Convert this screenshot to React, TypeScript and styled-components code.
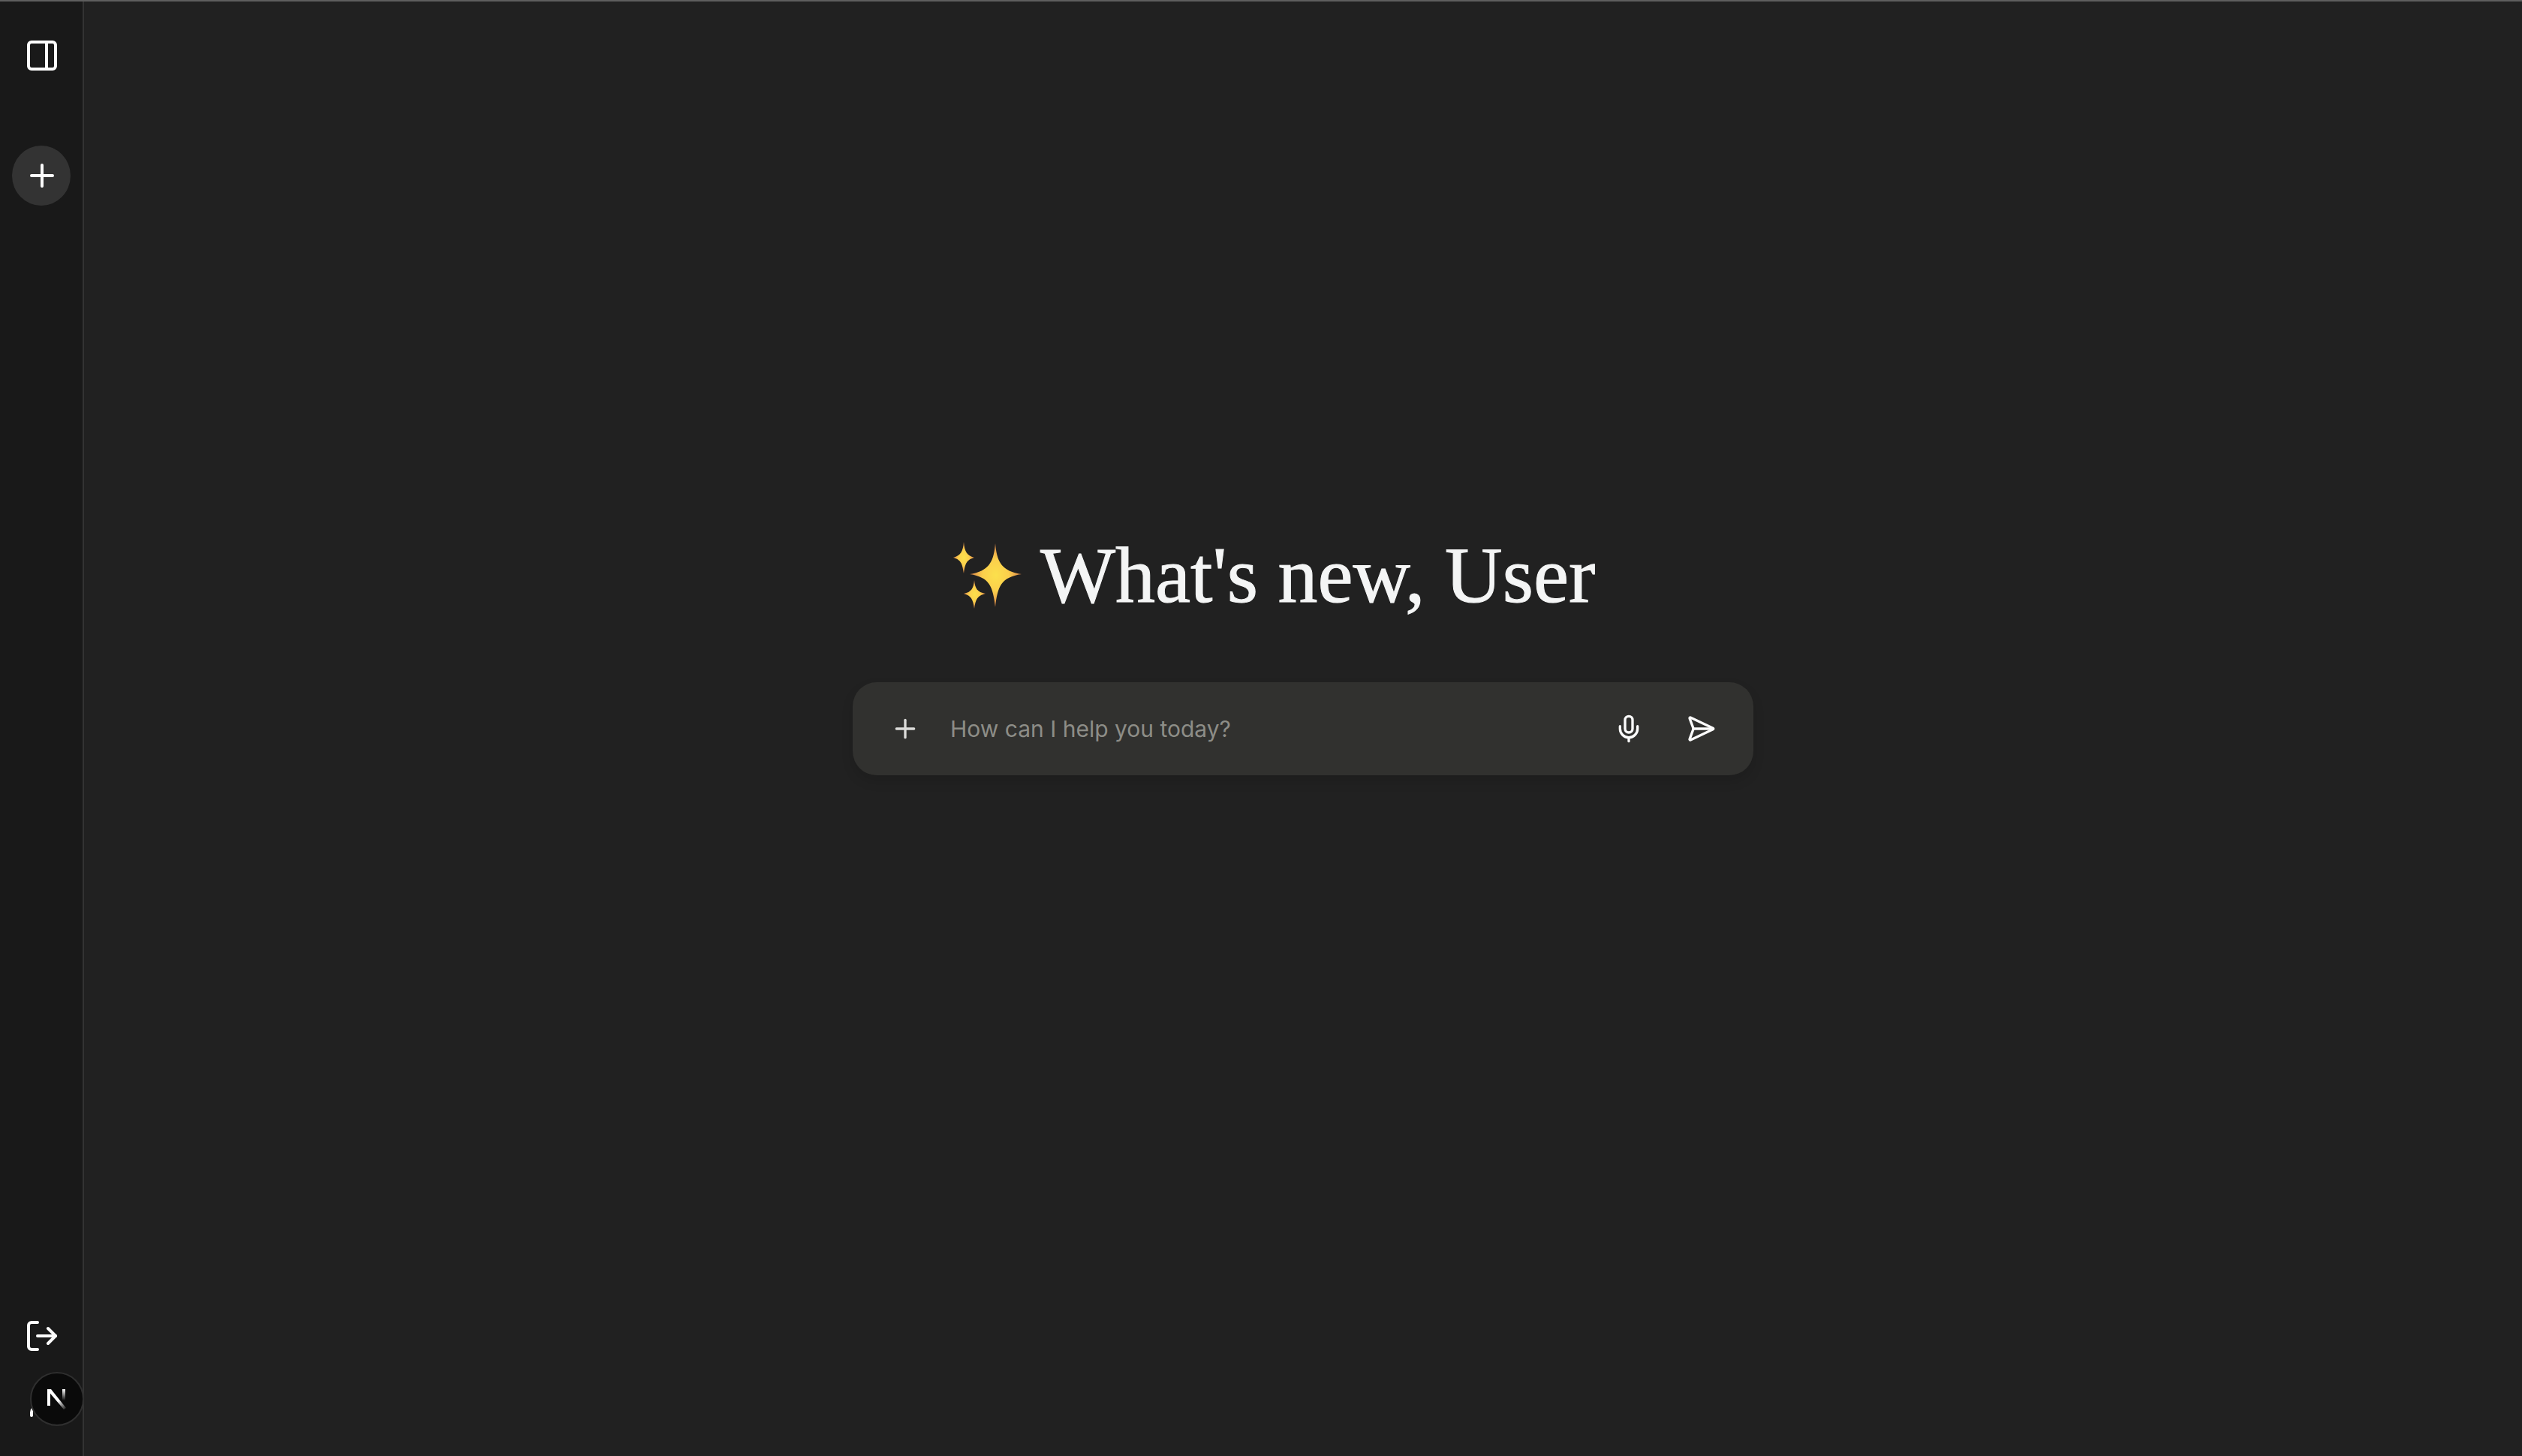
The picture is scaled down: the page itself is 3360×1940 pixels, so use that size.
import React from "react";
import styled, { createGlobalStyle } from "styled-components";
import { LogOut, Mic, PanelRight, Plus, SendHorizontal, User } from "lucide-react";

const GlobalStyle = createGlobalStyle`
  * { box-sizing: border-box; }
  body {
    margin: 0;
    background: #212121;
    color: #f8f9f9;
    font-family: Inter, "Liberation Sans", sans-serif;
  }
`;

const Shell = styled.div`
  display: flex;
  min-height: 100vh;
  border-top: 2px solid #5e5e5e;
`;

const Sidebar = styled.nav`
  display: flex;
  flex: none;
  flex-direction: column;
  justify-content: space-between;
  width: 112px;
  padding: 32px 16px;
  background: #191919;
  border-right: 2px solid #333333;
`;

const SidebarGroup = styled.div<{ $gap: number }>`
  display: flex;
  flex-direction: column;
  gap: ${(p) => p.$gap}px;
`;

const SidebarButton = styled.button<{ $filled?: boolean }>`
  display: flex;
  align-items: center;
  width: 100%;
  height: 80px;
  padding: 0 0 0 16px;
  border: 0;
  border-radius: 50%;
  background: ${(p) => (p.$filled ? "#333333" : "transparent")};
  color: #fcfcfc;
  cursor: pointer;

  svg {
    flex: none;
  }
`;

const Main = styled.main`
  display: flex;
  flex: 1;
  flex-direction: column;
  align-items: center;
  justify-content: center;
  padding: 0 48px 210px;
`;

const Content = styled.div`
  display: flex;
  flex-direction: column;
  gap: 74px;
  width: 100%;
  max-width: 1200px;
`;

const Heading = styled.h1`
  display: flex;
  align-items: center;
  gap: 24px;
  margin: 0;
  padding-left: 134px;
  color: #f4f5f5;
  font-family: "Liberation Serif", serif;
  font-size: 106px;
  font-weight: 400;
  line-height: 136px;
  white-space: nowrap;
  -webkit-text-stroke: 1px #f4f5f5;
`;

const SparklesIcon = styled.svg`
  flex: none;
  width: 92px;
  height: 92px;
`;

const Prompt = styled.form`
  display: flex;
  align-items: center;
  gap: 16px;
  height: 124px;
  padding: 0 30px;
  border-radius: 32px;
  background: #31312f;
  box-shadow: 0 8px 16px rgba(0, 0, 0, 0.12);
`;

const PromptButton = styled.button<{ $muted?: boolean }>`
  display: flex;
  flex: none;
  align-items: center;
  justify-content: center;
  width: 80px;
  height: 80px;
  padding: 0;
  border: 0;
  border-radius: 50%;
  background: transparent;
  color: ${(p) => (p.$muted ? "#dcdcda" : "#fcfcfc")};
  cursor: pointer;
`;

const PromptInput = styled.input`
  flex: 1;
  min-width: 0;
  height: 64px;
  padding: 0 0 0 4px;
  border: 0;
  outline: 0;
  background: transparent;
  color: #f4f5f5;
  font-family: Inter, "Liberation Sans", sans-serif;
  font-size: 30px;

  &::placeholder {
    color: #8d8d87;
    opacity: 1;
  }
`;

const DevBadge = styled.button`
  position: fixed;
  bottom: 40px;
  left: 40px;
  display: flex;
  align-items: center;
  justify-content: center;
  width: 72px;
  height: 72px;
  padding: 0;
  border: 2px solid #2f2f2f;
  border-radius: 50%;
  background: #0a0a0a;
  cursor: pointer;
`;

function Sparkles() {
  return (
    <SparklesIcon viewBox="0 0 92 92" aria-hidden="true">
      <defs>
        <radialGradient id="spark">
          <stop offset="0" stopColor="#fbe04c" />
          <stop offset="0.5" stopColor="#fbcf4c" />
          <stop offset="1" stopColor="#d98248" />
        </radialGradient>
      </defs>
      <path fill="url(#spark)" d="M56 3C58 27 64 40 91 44C64 48 59 60 56 88C53 60 48 48 22 44C48 40 54 27 56 3Z" />
      <path fill="url(#spark)" d="M14 1C15 14 18 19 28 22C18 25 16 29 14 43C12 29 10 25 0 22C10 19 13 14 14 1Z" />
      <path fill="url(#spark)" d="M28 52C29 63 32 68 43 70C32 73 30 77 28 90C26 77 24 73 14 70C24 68 27 63 28 52Z" />
    </SparklesIcon>
  );
}

function NextMark() {
  return (
    <svg width="26" height="30" viewBox="0 0 26 30" fill="none" aria-hidden="true">
      <defs>
        <linearGradient id="diag" x1="15" y1="17" x2="25" y2="30" gradientUnits="userSpaceOnUse">
          <stop stopColor="#fff" />
          <stop offset="1" stopColor="#fff" stopOpacity="0" />
        </linearGradient>
        <linearGradient id="stem" x1="22" y1="2" x2="22" y2="17" gradientUnits="userSpaceOnUse">
          <stop stopColor="#fff" />
          <stop offset="1" stopColor="#fff" stopOpacity="0" />
        </linearGradient>
      </defs>
      <path fill="#fff" d="M0 2h4v22H0z" />
      <path fill="url(#diag)" d="M0 2h5L25 27l-3 2L0 3z" />
      <path fill="url(#stem)" d="M20 2h4v15h-4z" />
    </svg>
  );
}

export default function App() {
  return (
    <>
      <GlobalStyle />
      <Shell>
        <Sidebar aria-label="Sidebar">
          <SidebarGroup $gap={80}>
            <SidebarButton type="button" aria-label="Open sidebar">
              <PanelRight size={48} />
            </SidebarButton>
            <SidebarButton type="button" $filled aria-label="New chat">
              <Plus size={48} />
            </SidebarButton>
          </SidebarGroup>
          <SidebarGroup $gap={8}>
            <SidebarButton type="button" aria-label="Log out">
              <LogOut size={48} />
            </SidebarButton>
            <SidebarButton type="button" aria-label="Account">
              <User size={48} />
            </SidebarButton>
          </SidebarGroup>
        </Sidebar>
        <Main>
          <Content>
            <Heading>
              <Sparkles />
              What's new, User
            </Heading>
            <Prompt onSubmit={(e: React.FormEvent) => e.preventDefault()}>
              <PromptButton type="button" $muted aria-label="Add attachment">
                <Plus size={40} />
              </PromptButton>
              <PromptInput type="text" aria-label="Message" placeholder="How can I help you today?" />
              <PromptButton type="button" aria-label="Dictate">
                <Mic size={40} />
              </PromptButton>
              <PromptButton type="submit" aria-label="Send">
                <SendHorizontal size={40} />
              </PromptButton>
            </Prompt>
          </Content>
        </Main>
      </Shell>
      <DevBadge type="button" aria-label="Open developer tools">
        <NextMark />
      </DevBadge>
    </>
  );
}
